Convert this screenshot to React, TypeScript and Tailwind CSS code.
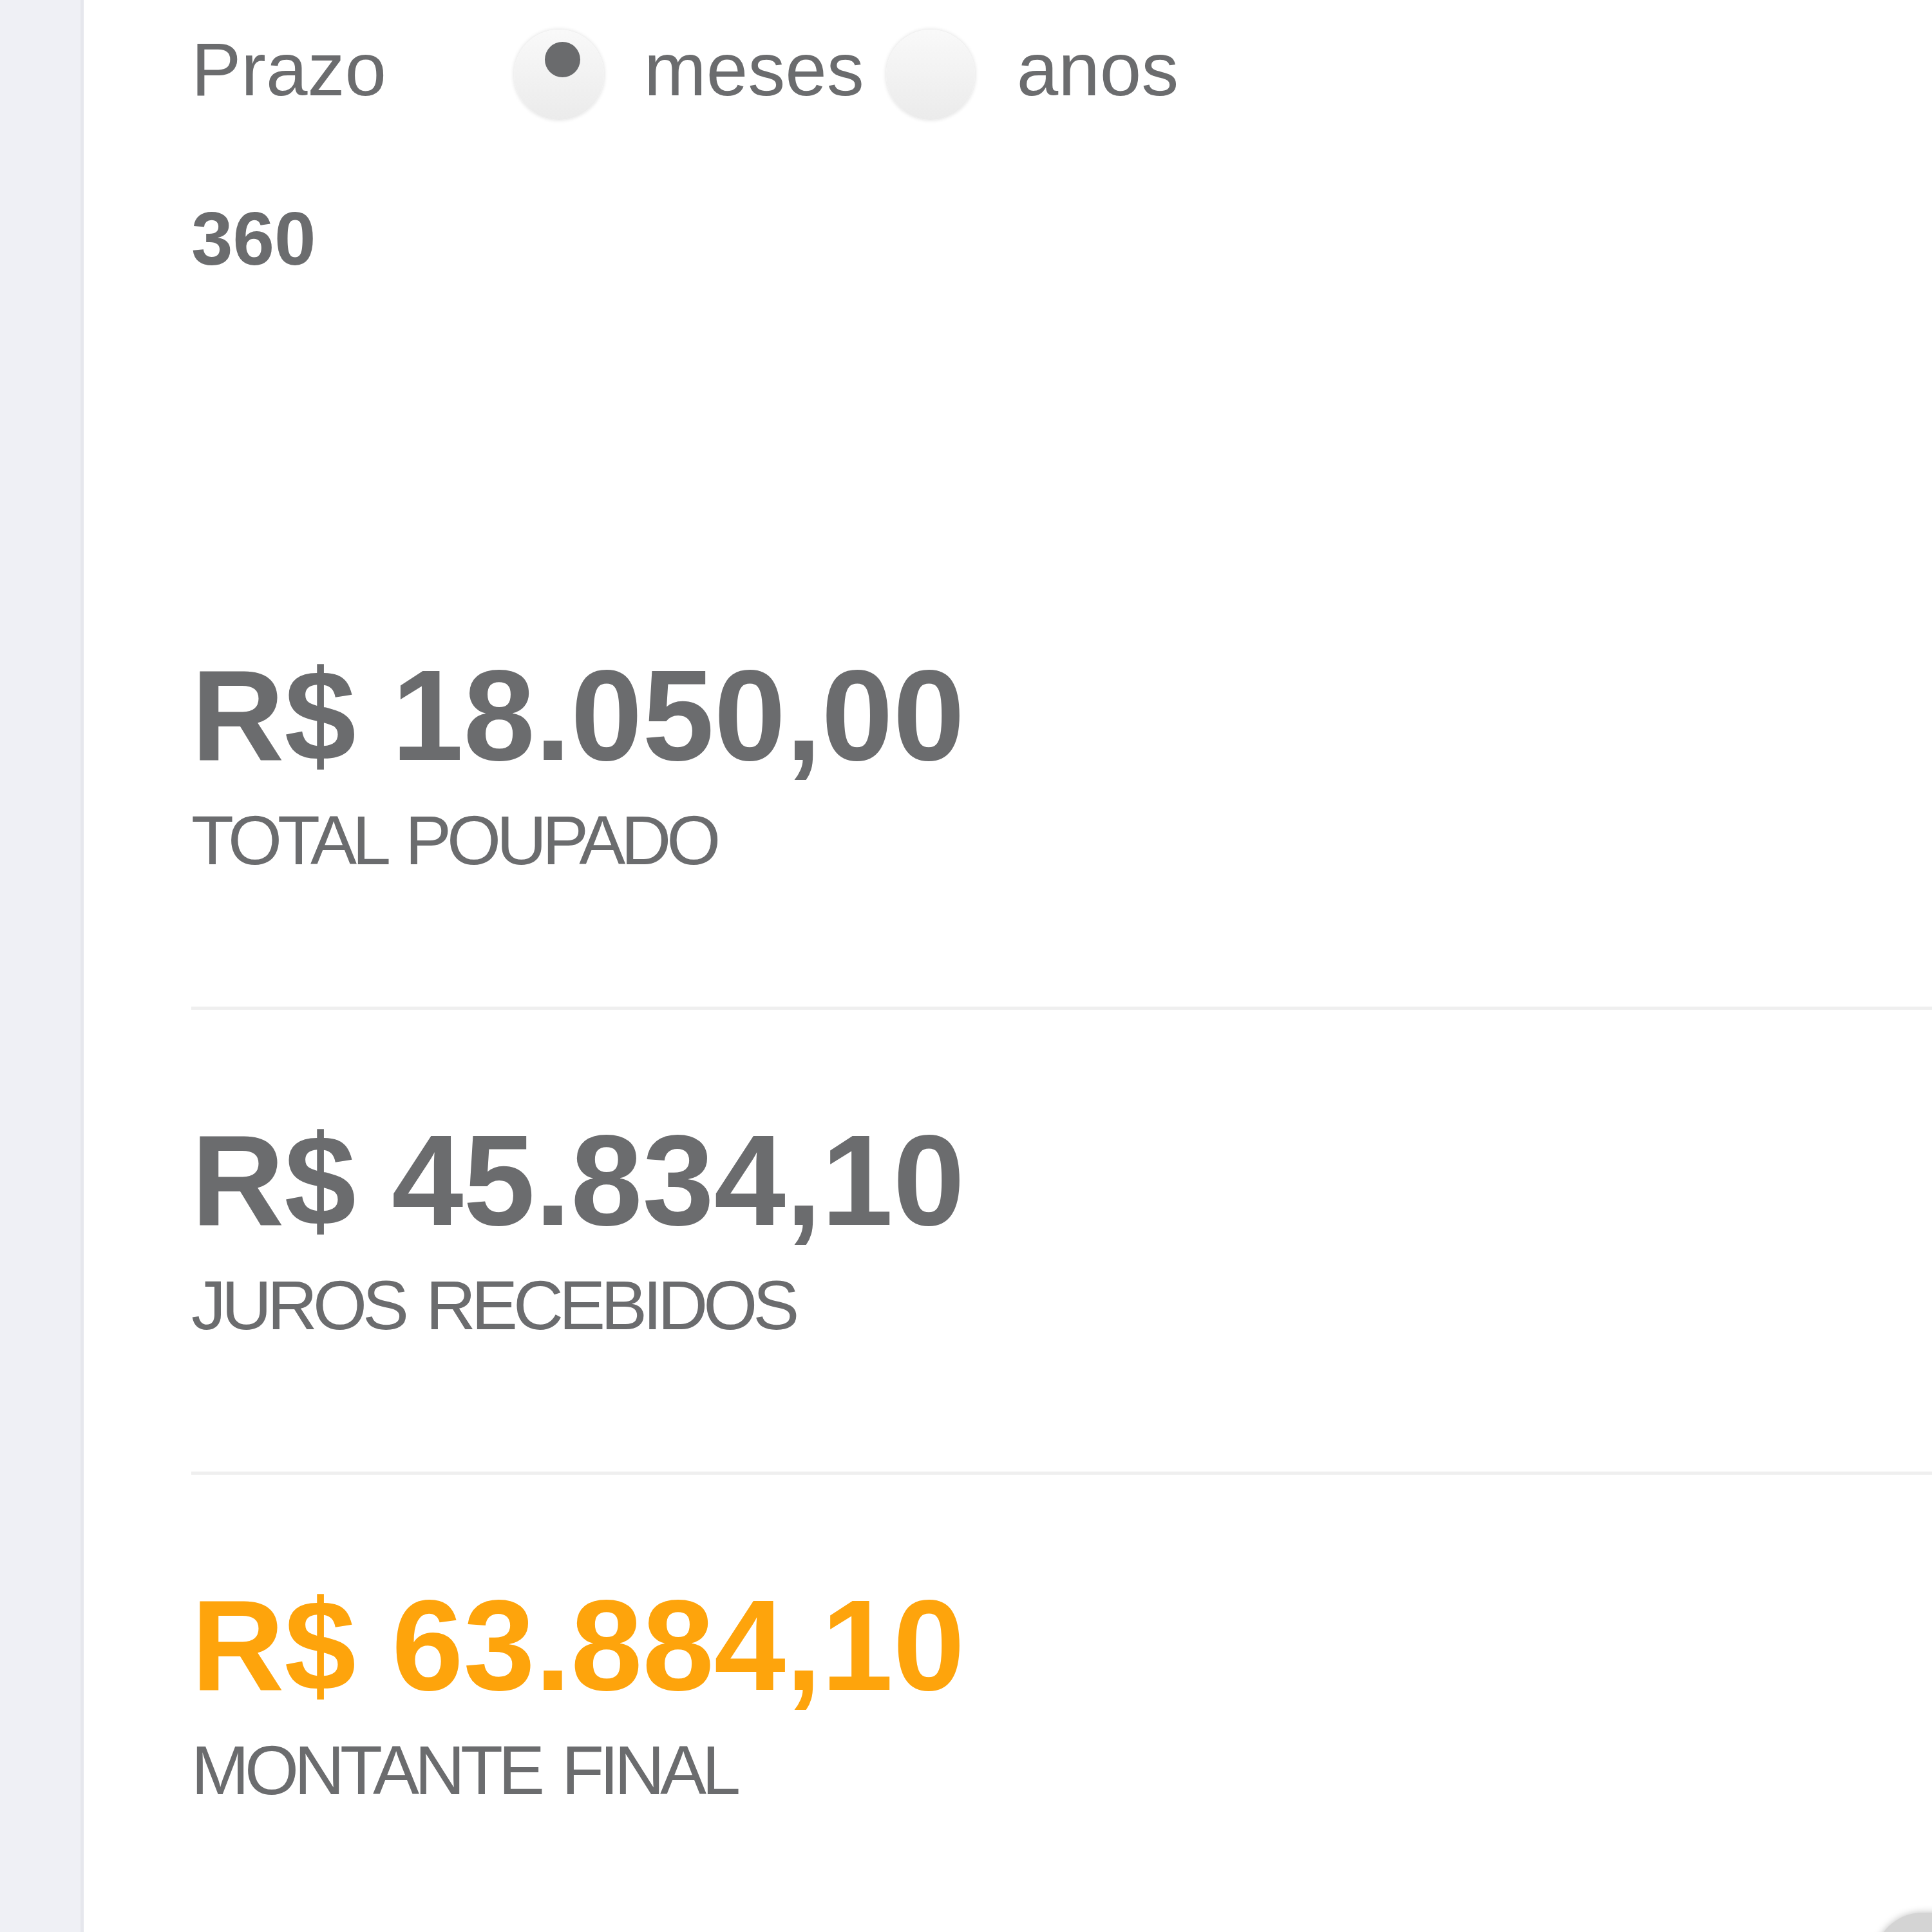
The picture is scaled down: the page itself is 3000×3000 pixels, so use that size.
export default function App() {
  const rows = [
    { value: 'R$ 18.050,00', label: 'TOTAL POUPADO', highlight: false },
    { value: 'R$ 45.834,10', label: 'JUROS RECEBIDOS', highlight: false },
    { value: 'R$ 63.884,10', label: 'MONTANTE FINAL', highlight: true },
  ];

  return (
    <div className="flex w-[3000px] h-[3000px] overflow-hidden bg-white font-['Liberation_Sans',Arial,sans-serif] text-[#6b6c6e]">
      {/* left rail */}
      <div className="w-[130px] shrink-0 bg-[#eff0f5] border-r-[5px] border-[#e6e7ed]" />

      <div className="relative flex-1 pl-[167px]">
        {/* Prazo row */}
        <div className="flex items-start pt-[46px]">
          <span className="mt-[4px] text-[116px] leading-none">Prazo</span>
          <div className="relative ml-[198px] w-[140px] h-[140px] rounded-full bg-gradient-to-b from-[#f9f9f9] to-[#ebebeb] shadow-[0_0_6px_rgba(0,0,0,0.14)]">
            <div className="absolute left-[48px] top-[19px] w-[55px] h-[55px] rounded-full bg-[#6a6b6d]" />
          </div>
          <span className="ml-[62px] mt-[4px] text-[116px] leading-none">meses</span>
          <div className="ml-[34px] w-[138px] h-[140px] rounded-full bg-gradient-to-b from-[#f9f9f9] to-[#ebebeb] shadow-[0_0_6px_rgba(0,0,0,0.14)]" />
          <span className="ml-[65px] mt-[4px] text-[116px] leading-none">anos</span>
        </div>

        <div className="mt-[127px] text-[116px] leading-none font-bold">360</div>

        {/* results */}
        <div className="mt-[582px]">
          {rows.map((r, i) => (
            <div key={r.label}>
              {i > 0 && <div className="h-[5px] bg-[#efefef] mt-[204px] mb-[165px]" />}
              <div
                className={`text-[200px] leading-none font-bold ${
                  r.highlight ? 'text-[#fea40c]' : 'text-[#6b6c6e]'
                }`}
              >
                {r.value}
              </div>
              <div className="mt-[40px] text-[108px] leading-none tracking-[-7px] [word-spacing:10px]">
                {r.label}
              </div>
            </div>
          ))}
        </div>

        {/* peeking floating button */}
        <div className="absolute right-[-80px] bottom-[-120px] w-[170px] h-[150px] rounded-full bg-[#d4d4d4] shadow-[0_0_12px_rgba(0,0,0,0.25)]" />
      </div>
    </div>
  );
}
